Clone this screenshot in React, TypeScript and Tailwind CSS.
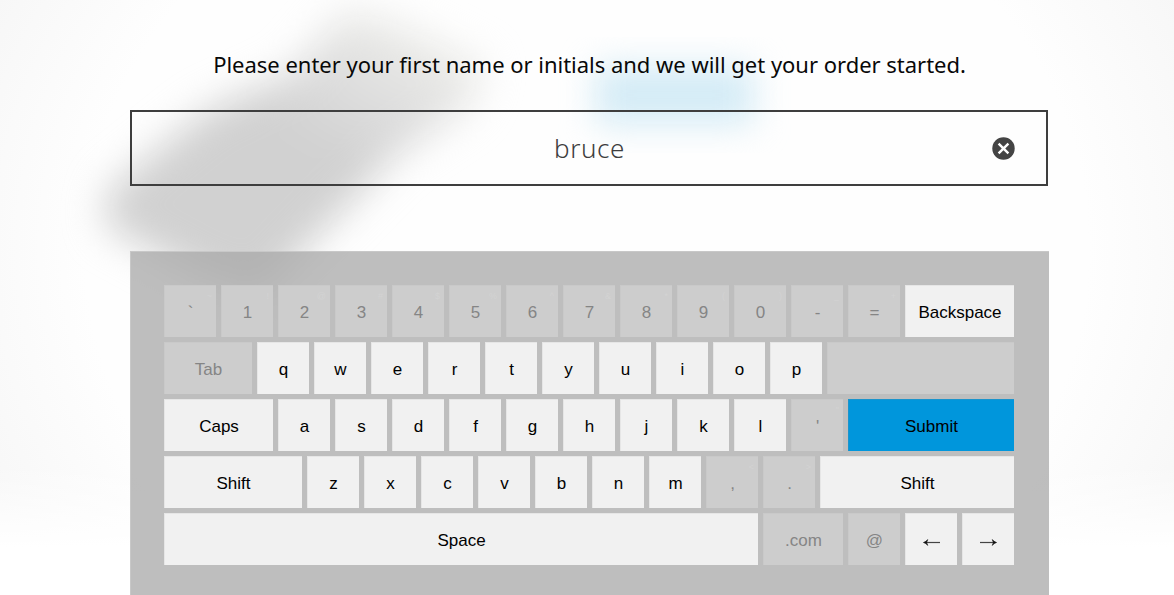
import React from "react";

type KeySpec = {
  label: React.ReactNode;
  width?: string;
  shift?: string;
  kind?: "normal" | "disabled" | "submit";
};

const off = (label: string, shift = "", width = "w-[52px]"): KeySpec => ({ label, shift, width, kind: "disabled" });
const letters = (s: string): KeySpec[] => s.split("").map((label) => ({ label }));

function Arrow({ left = false }: { left?: boolean }) {
  return (
    <svg viewBox="0 0 17 9" className={`mt-[3px] h-[9px] w-[17px] ${left ? "rotate-180" : ""}`} aria-label={left ? "Left" : "Right"}>
      <path d="M0 4.5 H14" stroke="#444" strokeWidth="1.2" />
      <path d="M12.4 1.6 Q13.4 3.7 16.5 4.5 Q13.4 5.3 12.4 7.4 L13.4 4.5 Z" fill="#111" stroke="#111" strokeWidth="0.7" />
    </svg>
  );
}

const rows: KeySpec[][] = [
  [
    off("`", "~"), off("1", "!"), off("2", "@"), off("3", "#"), off("4", "$"), off("5", "%"), off("6", "^"),
    off("7", "&"), off("8", "*"), off("9", "("), off("0", ")"), off("-", "_"), off("=", "+"),
    { label: "Backspace", width: "flex-1" },
  ],
  [off("Tab", "", "w-[88px]"), ...letters("qwertyuiop"), off("", "", "flex-1")],
  [
    { label: "Caps", width: "w-[109px]" },
    ...letters("asdfghjkl"),
    off("'", '"'),
    { label: "Submit", width: "flex-1", kind: "submit" },
  ],
  [
    { label: "Shift", width: "w-[138px]" },
    ...letters("zxcvbnm"),
    off(",", "<"), off(".", ">"),
    { label: "Shift", width: "flex-1" },
  ],
  [
    { label: "Space", width: "flex-1" },
    off(".com", "", "w-[80px]"),
    off("@"),
    { label: <Arrow left /> },
    { label: <Arrow /> },
  ],
];

const kinds = {
  normal: "bg-[#f1f1f1] text-black shadow-[inset_1px_1px_0_#e6e6e6]",
  disabled: "bg-[#cdcdcd] text-[#858585] shadow-[inset_1px_1px_0_#c9c9c9]",
  submit: "bg-[#0096dc] text-black shadow-[inset_1px_1px_0_#1b94cc]",
};

function Key({ label, width = "w-[52px]", shift, kind = "normal" }: KeySpec) {
  return (
    <button className={`relative flex h-[52px] items-center justify-center pt-[3px] pl-px text-[17px] leading-5 ${width} ${kinds[kind]}`}>
      {label}
      {shift && <span className="absolute top-[5px] right-1 text-[9px] leading-3 text-[#d3d3d3]">{shift}</span>}
    </button>
  );
}

function Backdrop() {
  return (
    <svg className="absolute inset-0 h-full w-full" viewBox="0 0 1174 595" aria-hidden="true">
      <defs>
        <filter id="soft" x="-50%" y="-50%" width="200%" height="200%" colorInterpolationFilters="sRGB">
          <feGaussianBlur stdDeviation="19" />
        </filter>
        <filter id="softer" x="-50%" y="-50%" width="200%" height="200%" colorInterpolationFilters="sRGB">
          <feGaussianBlur stdDeviation="17" />
        </filter>
        <radialGradient id="vignette" cx="0.5" cy="0.5" r="0.5">
          <stop offset="0.76" stopColor="#fefefe" />
          <stop offset="1" stopColor="#f7f7f7" />
        </radialGradient>
        <linearGradient id="floor" x1="0" y1="0" x2="0" y2="1">
          <stop offset="0.78" stopColor="#fff" stopOpacity="0" />
          <stop offset="0.92" stopColor="#fff" />
        </linearGradient>
        <linearGradient id="shade" x1="395" y1="25" x2="320" y2="150" gradientUnits="userSpaceOnUse">
          <stop offset="0" stopColor="#ecece9" />
          <stop offset="0.5" stopColor="#dedede" />
          <stop offset="1" stopColor="#d1d1d1" />
        </linearGradient>
      </defs>
      <rect width="1174" height="595" fill="#f7f7f7" />
      <ellipse cx="587" cy="250" rx="660" ry="560" fill="url(#vignette)" />
      <rect width="1174" height="595" fill="url(#floor)" />
      <path d="M345 10 L395 22 L486 66 L470 106 L395 156 L328 225 L258 298 L195 274 L104 225 L108 190 L205 112 L292 72 Z" fill="url(#shade)" filter="url(#soft)" />
      <rect x="596" y="66" width="157" height="58" fill="#d3ebf6" filter="url(#softer)" />
    </svg>
  );
}

export default function App() {
  return (
    <main className="relative h-[595px] w-full overflow-hidden bg-white">
      <Backdrop />
      <div className="relative flex h-full flex-col pr-[125px] pl-[130px]">
        <h1 className="mt-[48px] h-8 text-center font-['Noto_Sans',sans-serif] text-[22px] leading-8 font-normal tracking-[-0.02px] whitespace-nowrap text-[#080808]">
          Please enter your first name or initials and we will get your order started.
        </h1>
        <div className="mt-[30px] mr-px flex h-[76px] shrink-0 items-center border-2 border-[#3e3e3e] pr-[31px] pl-[55px]">
          <div className="flex-1 pb-px text-center font-['Noto_Sans',sans-serif] text-[26px] leading-9 font-light tracking-[0.6px] text-[#3d3d3d]">
            bruce
          </div>
          <button aria-label="Clear" className="h-[23px] w-[23px]">
            <svg viewBox="0 0 23 23" className="h-full w-full">
              <circle cx="11.5" cy="11.5" r="11.2" fill="#444" />
              <path d="M6.6 6.6 L16.4 16.4 M16.4 6.6 L6.6 16.4" stroke="#fff" strokeWidth="2.4" />
            </svg>
          </button>
        </div>
        <section className="mt-[65px] flex flex-1 flex-col gap-[5px] border-t border-l border-[#c8c8c8] bg-[#a8a8a8]/75 pt-[33px] pr-[35px] pl-[33px] font-['Liberation_Sans',Arial,sans-serif]">
          {rows.map((row, i) => (
            <div key={i} className="flex gap-[5px]">
              {row.map((k, j) => (
                <Key key={j} {...k} />
              ))}
            </div>
          ))}
        </section>
      </div>
    </main>
  );
}
